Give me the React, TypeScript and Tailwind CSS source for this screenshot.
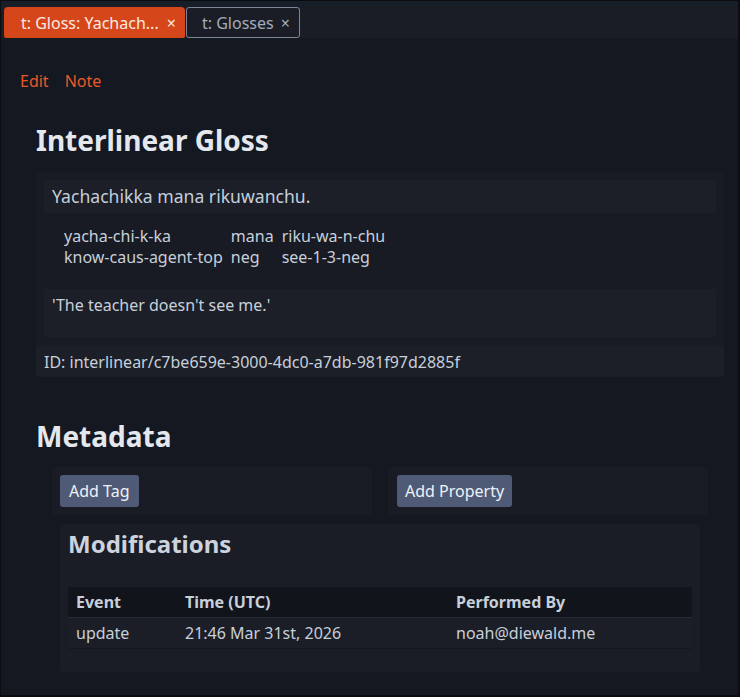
import React from 'react';

const glossWords = [
  { word: 'yacha-chi-k-ka', gloss: 'know-caus-agent-top' },
  { word: 'mana', gloss: 'neg' },
  { word: 'riku-wa-n-chu', gloss: 'see-1-3-neg' },
];

function Tab({ label, active }: { label: string; active?: boolean }) {
  return (
    <div
      className={
        active
          ? 'h-[31px] w-[181px] flex items-center justify-between pl-[17px] pr-[9px] rounded-t-[4px] rounded-b-[2px] bg-[#d5461a] text-[#fbe9e2]'
          : 'h-[31px] flex items-center gap-[7px] pl-[15px] pr-[9px] rounded-[3px] border border-[#7d8697] text-[#a3acbb]'
      }
    >
      <span className="text-[16px] leading-none">{label}</span>
      <span className="text-[16px] leading-none">×</span>
    </div>
  );
}

export default function App() {
  return (
    <div
      className="w-[740px] h-[697px] overflow-hidden bg-[#141820] border-t border-l border-r-2 border-b-2 border-[#0b0d11] text-[#c7cfdb]"
      style={{ fontFamily: '"Noto Sans", "Open Sans", sans-serif' }}
    >
      {/* tab strip */}
      <div className="h-[37px] bg-[#1a1d25] border-t-[5px] border-[#171e28] flex items-end gap-px pl-[3px]">
        <Tab label="t: Gloss: Yachach..." active />
        <Tab label="t: Glosses" />
      </div>

      <div className="pl-[19px] pr-[14px] pt-[31px]">
        <div className="flex gap-[16px] text-[16px] leading-[24px] text-[#e8582c]">
          <span>Edit</span>
          <span>Note</span>
        </div>

        <div className="pl-[16px]">
          <h1 className="mt-[29px] text-[28px] leading-[36px] font-bold text-[#e4e8ee]">Interlinear Gloss</h1>

          <div className="mt-[14px] rounded-[4px] bg-[#181b23] overflow-hidden">
            <div className="p-[8px] pb-[9px]">
              <div className="h-[33px] bg-[#1c1f27] flex items-center px-[8px] text-[17.6px] text-[#c3cedc]">
                Yachachikka mana rikuwanchu.
              </div>
              <div className="flex gap-[8px] pl-[20px] pt-[13px] pb-[21px] text-[16px] leading-[21px]">
                {glossWords.map((w) => (
                  <div key={w.word} className="flex flex-col">
                    <span>{w.word}</span>
                    <span>{w.gloss}</span>
                  </div>
                ))}
              </div>
              <div className="h-[48px] bg-[#1c1f27] px-[8px] pt-[4px] text-[16px] leading-[24px]">
                'The teacher doesn't see me.'
              </div>
            </div>
            <div className="h-[31px] bg-[#1c1f27] flex items-center px-[8px] text-[16px]">
              ID: interlinear/c7be659e-3000-4dc0-a7db-981f97d2885f
            </div>
          </div>

          <h2 className="mt-[41px] text-[28px] leading-[36px] font-bold text-[#e4e8ee]">Metadata</h2>

          <div className="px-[16px] mt-[13px]">
            <div className="grid grid-cols-2 gap-[16px]">
              <div className="h-[48px] rounded-[4px] bg-[#191c24] p-[8px]">
                <button className="h-[32px] px-[9px] rounded-[3px] bg-[#4f5b76] text-[16px] text-[#eef1f6]">Add Tag</button>
              </div>
              <div className="h-[48px] rounded-[4px] bg-[#191c24] p-[8px] pl-[9px]">
                <button className="h-[32px] px-[8px] rounded-[3px] bg-[#4f5b76] text-[16px] text-[#eef1f6]">Add Property</button>
              </div>
            </div>

            <div className="mx-[8px] mt-[9px] h-[148px] rounded-[4px] bg-[#1a1d25] px-[8px]">
              <h3 className="pt-[4px] text-[24px] leading-[32px] font-bold text-[#ccd3de]">Modifications</h3>
              <div className="mt-[27px] bg-[#1b1e26]">
                <table className="w-full text-[16px] text-left border-collapse">
                  <thead>
                    <tr className="h-[30px] bg-[#11141a] border-b border-[#262a33]">
                      <th className="pl-[8px] w-[117px] font-bold">Event</th>
                      <th className="w-[271px] font-bold">Time (UTC)</th>
                      <th className="font-bold">Performed By</th>
                    </tr>
                  </thead>
                  <tbody>
                    <tr className="h-[31px] bg-[#1b1e26] border-b border-[#14171e]">
                      <td className="pl-[8px]">update</td>
                      <td>21:46 Mar 31st, 2026</td>
                      <td>noah@diewald.me</td>
                    </tr>
                  </tbody>
                </table>
              </div>
            </div>
          </div>
        </div>
      </div>
    </div>
  );
}
